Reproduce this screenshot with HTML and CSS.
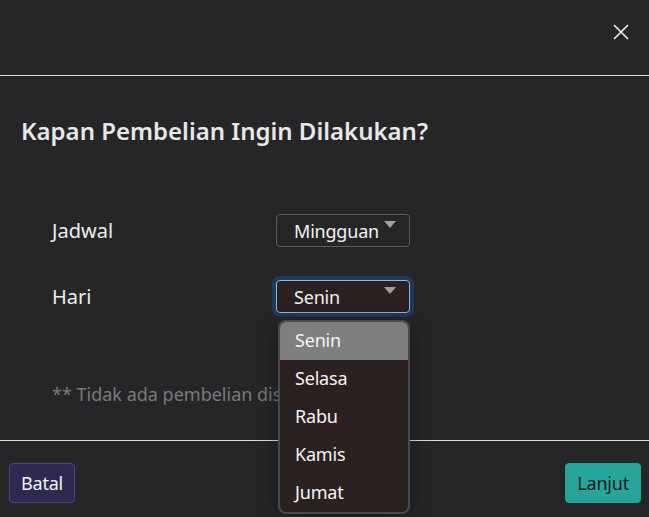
FILE: index.html
```html
<!DOCTYPE html>
<html lang="id">
<head>
<meta charset="utf-8">
<title>Jadwal Pembelian</title>
<link rel="stylesheet" href="styles.css">
</head>
<body>
<div class="modal">
  <header class="modal-header">
    <button class="close" aria-label="Tutup">
      <svg width="16" height="16" viewBox="0 0 16 16"><path d="M1 1L15 15M15 1L1 15" stroke="#f0f0f0" stroke-width="1.6" fill="none"/></svg>
    </button>
  </header>
  <main class="modal-body">
    <h1 class="title">Kapan Pembelian Ingin Dilakukan?</h1>
    <div class="form">
      <div class="row">
        <span class="label">Jadwal</span>
        <div class="select">
          <span class="value">Mingguan</span>
          <span class="arrow"></span>
        </div>
      </div>
      <div class="row">
        <span class="label">Hari</span>
        <div class="select-wrap">
          <div class="select focused">
            <span class="value">Senin</span>
            <span class="arrow"></span>
          </div>
          <ul class="menu">
            <li class="active">Senin</li>
            <li>Selasa</li>
            <li>Rabu</li>
            <li>Kamis</li>
            <li>Jumat</li>
          </ul>
        </div>
      </div>
    </div>
    <p class="note">** Tidak ada pembelian dis</p>
  </main>
  <footer class="modal-footer">
    <button class="btn btn-cancel">Batal</button>
    <button class="btn btn-next">Lanjut</button>
  </footer>
</div>
</body>
</html>
```

FILE: styles.css
```css
* { box-sizing: border-box; }
html, body { margin: 0; padding: 0; }
body {
  background: #262628;
  color: #e8e8e8;
  font-family: "Noto Sans", "Open Sans", sans-serif;
  width: 649px;
  height: 517px;
  overflow: hidden;
}
.modal {
  display: flex;
  flex-direction: column;
  height: 517px;
}
.modal-header {
  height: 76px;
  border-bottom: 1px solid #e0e0e0;
  display: flex;
  justify-content: flex-end;
  align-items: flex-start;
  padding: 24px 20px 0 0;
}
.close {
  background: none;
  border: 0;
  padding: 0;
  width: 16px;
  height: 16px;
  cursor: pointer;
}
.close svg { display: block; }
.modal-body {
  flex: 1;
  padding: 0 21px;
}
.title {
  margin: 39px 0 0;
  font-size: 24px;
  font-weight: 600;
  color: #e8e8e8;
  line-height: 32px;
  letter-spacing: 0;
}
.form {
  margin-top: 67px;
  padding-left: 31px;
  display: flex;
  flex-direction: column;
  gap: 33px;
}
.row {
  display: grid;
  grid-template-columns: 224px 134px;
  align-items: center;
  height: 33px;
}
.label {
  font-size: 20px;
  color: #ececec;
}
.select-wrap { position: relative; }
.select {
  height: 33px;
  border: 1px solid #5c5c5e;
  border-radius: 4px;
  display: flex;
  align-items: center;
  padding: 0 13px 0 17px;
  font-size: 18px;
  color: #f2f2f2;
  letter-spacing: -0.2px;
}
.select .value { flex: 1; }
.arrow {
  width: 0;
  height: 0;
  border-left: 6px solid transparent;
  border-right: 6px solid transparent;
  border-top: 7px solid #a0a0a0;
  margin-top: -12px;
}
.select.focused {
  background: #2a2120;
  border-color: #8cb8e8;
  box-shadow: 0 0 0 4px #213a57;
}
.menu {
  position: absolute;
  top: 40px;
  left: 2px;
  width: 132px;
  margin: 0;
  padding: 0;
  list-style: none;
  background: #2b2120;
  border: 2px solid #4a4a4a;
  border-radius: 8px;
  overflow: hidden;
  box-shadow: 0 4px 24px rgba(0, 0, 0, 0.35);
  z-index: 2;
}
.menu li {
  height: 38px;
  line-height: 37px;
  padding-left: 15px;
  font-size: 18px;
  color: #f4f4f4;
  letter-spacing: -0.2px;
}
.menu li.active { background: #7f7f7f; }
.note {
  margin: 69px 0 0 31px;
  font-size: 18px;
  color: #7a7a7a;
}
.modal-footer {
  height: 77px;
  border-top: 1px solid #e0e0e0;
  display: flex;
  justify-content: space-between;
  align-items: flex-start;
  padding: 22px 8px 0 9px;
}
.btn {
  height: 40px;
  border-radius: 4px;
  font-family: inherit;
  font-size: 18px;
  padding: 0 11px;
  cursor: pointer;
  letter-spacing: -0.2px;
}
.btn-cancel {
  background: #2e2950;
  border: 1px solid #4d4680;
  color: #f2f2f2;
}
.btn-next {
  background: #26a69a;
  border: 1px solid #26a69a;
  color: #1c1c1c;
  padding: 0 11px;
}
```
